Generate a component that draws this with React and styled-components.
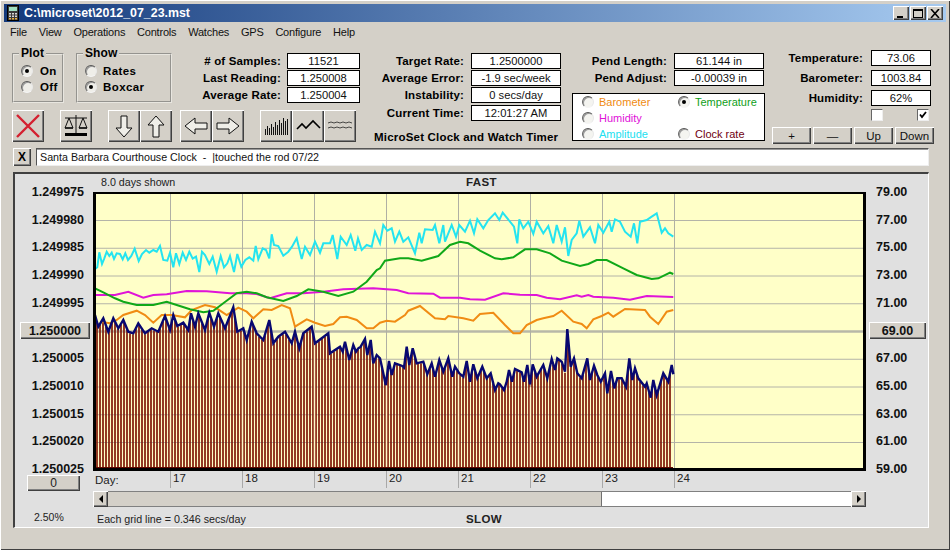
import React from 'react';
import styled, { createGlobalStyle, css } from 'styled-components';

const Global = createGlobalStyle`
  html, body { margin: 0; padding: 0; background: #d4d0c8; }
  * { box-sizing: border-box; }
`;

const raised = css`
  background: #d4d0c8;
  border: 0;
  box-shadow: inset 1px 1px #fff, inset -1px -1px #404040, inset -2px -2px #808080;
`;

const Win = styled.div`
  width: 950px; height: 550px; padding: 4px; overflow: hidden;
  background: #d4d0c8; color: #000;
  font: 11px "Liberation Sans", Arial, sans-serif;
  box-shadow: inset 1px 1px #fff, inset -1px -1px #404040;
`;
const TitleBar = styled.div`
  height: 18px; display: flex; align-items: center; padding: 0 3px;
  background: linear-gradient(90deg, #143a7c 0%, #a6caf0 100%);
`;
const TitleText = styled.span`
  flex: 1; margin-left: 5px; color: #fff; font-weight: 700; font-size: 12.4px;
`;
const CapBtn = styled.button`
  ${raised}; width: 16px; height: 14px; padding: 0; display: flex; align-items: center; justify-content: center;
`;
const CapGroup = styled.div`display: flex; gap: 1px;`;
const Menu = styled.nav`
  height: 20px; display: flex; align-items: center; padding-left: 6px; gap: 11.8px; font-size: 11px; letter-spacing: -.2px; color: #111;
`;
const Toolbar = styled.div`display: flex; height: 105px; padding-left: 8px;`;
const Col = styled.div`
  width: ${p => p.$w}px; flex: none; display: flex; flex-direction: column; padding-top: ${p => p.$top}px;
`;
const Row1 = styled.div`display: flex; align-items: flex-start; height: 56px;`;
const Group = styled.fieldset`
  width: ${p => p.$w}px; height: 56px; margin: 0 ${p => p.$mr}px 0 0; padding: 5px 0 0 7px; flex: none;
  border: 2px groove #e8e6e0; display: flex; flex-direction: column; gap: 4px; min-width: 0;
`;
const GroupTitle = styled.legend`
  padding: 0 2px; margin-left: -2px; font-size: 12px; font-weight: 700; line-height: 13px; letter-spacing: .1px;
`;
const RadioRow = styled.label`
  display: flex; align-items: center; gap: ${p => p.$gap || 6}px; height: 12px; font-weight: ${p => p.$plain ? 400 : 700};
  font-size: ${p => p.$plain ? 11 : 11.5}px; color: ${p => p.$color || '#000'}; letter-spacing: ${p => p.$plain ? 0 : .4}px;
`;
const Radio = styled.span`
  width: 12px; height: 12px; flex: none; border-radius: 50%; position: relative;
  background: ${p => p.$bg || '#efeee9'};
  border: 1px solid; border-color: #555 #e8e8e8 #f4f4f4 #666;
  box-shadow: inset 1px 1px #999;
  &::after {
    content: ''; display: ${p => p.$on ? 'block' : 'none'}; position: absolute; left: 3px; top: 3px;
    width: 4px; height: 4px; border-radius: 50%; background: #000;
  }
`;
const Stats = styled.div`
  display: flex; flex-direction: column; gap: ${p => p.$gap ?? 1}px; margin-top: ${p => p.$mt || 0}px;
`;
const StatRow = styled.div`
  display: grid; grid-template-columns: ${p => p.$lw}px ${p => p.$bw}px; column-gap: ${p => p.$cg}px; height: 16px; align-items: center;
`;
const StatLabel = styled.span`
  text-align: right; font-weight: 700; font-size: 11.5px; letter-spacing: .15px; white-space: nowrap;
`;
const StatBox = styled.span`
  height: 16px; line-height: 14px; background: #fff; border: 1px solid #000; text-align: center; font-size: 11.2px; color: #111;
`;
const Stat = ({ label, value, lw, bw, cg }) => (
  <StatRow $lw={lw} $bw={bw} $cg={cg}><StatLabel>{label}</StatLabel><StatBox>{value}</StatBox></StatRow>
);
const IconRow = styled.div`display: flex; margin-top: 7px;`;
const IconBtn = styled.button`
  ${raised}; width: 32px; height: 32px; padding: 0; margin-right: ${p => p.$mr || 0}px; flex: none;
  display: flex; align-items: center; justify-content: center;
`;
const AppTitle = styled.div`
  margin: 9px 0 0 14px; font-weight: 700; font-size: 11.5px; line-height: 14px; letter-spacing: .2px; white-space: nowrap;
`;
const Legend = styled.div`
  width: 193px; height: 48px; margin-top: 7px; background: #fff; border: 1px solid #000;
  display: grid; grid-template-columns: 96px 1fr; grid-auto-rows: 16px; padding: 0 0 0 9px;
`;
const LegendCell = styled.div`display: flex; align-items: center;`;
const Checks = styled.div`display: flex; gap: 34px; margin: 3px 0 0 99px;`;
const Check = styled.span`
  width: 12px; height: 12px; background: #fff; border: 1px solid; border-color: #666 #eee #eee #666;
  display: flex; align-items: center; justify-content: center;
`;
const SmallBtns = styled.div`display: flex; gap: 2px; margin-top: 6px;`;
const SmallBtn = styled.button`
  ${raised}; width: 39px; height: 17px; padding: 0; font: 11.5px "Liberation Sans", Arial, sans-serif; color: #111;
`;
const NoteRow = styled.div`display: flex; gap: 5px; margin: 1px 0 6px 9px; height: 18px;`;
const CloseNote = styled.button`
  ${raised}; width: 18px; height: 18px; padding: 0; font: 700 12px "Liberation Sans", Arial, sans-serif;
`;
const NoteField = styled.div`
  width: 893px; height: 18px; padding: 0 3px; line-height: 16px; font-size: 10.7px; white-space: pre; background: #fff; color: #111;
  border: 1px solid; border-color: #555 #eee #eee #555; box-shadow: inset 0 1px #999;
`;
const Panel = styled.div`
  margin-left: 9px; width: 916px; height: 356px; display: flex; background: #e0e0e0;
  border-style: solid; border-width: 2px 1px 1px 2px; border-color: #404040 #fff #fff #404040;
`;
const AxisCol = styled.div`
  width: ${p => p.$w}px; flex: none; display: flex; flex-direction: column; padding-top: 11px;
`;
const AxisStack = styled.div`display: flex; flex-direction: column; gap: 12.7px;`;
const Tick = styled.div`
  height: 15px; line-height: 15px; font-weight: 700; font-size: 12.5px; color: #111;
  text-align: ${p => p.$right ? 'right' : 'left'};
  padding: ${p => p.$right ? '0 9px 0 0' : '0 0 0 10px'};
`;
const AxisBtn = styled.button`
  ${raised}; display: block; height: 17px; width: ${p => p.$w}px; padding: 0; margin: -1px 0 -1px ${p => p.$ml}px;
  font: 700 12.5px "Liberation Sans", Arial, sans-serif; color: #111;
`;
const ZeroBtn = styled.button`
  ${raised}; height: 16px; width: 53px; margin: -2px 0 0 12px; padding: 0; font: 12px "Liberation Sans", Arial, sans-serif; color: #222;
`;
const Percent = styled.div`margin: 20px 0 0 19px; font-size: 10.5px; color: #222;`;
const Center = styled.div`width: 773px; flex: none; display: flex; flex-direction: column;`;
const CaptionRow = styled.div`
  height: ${p => p.$h}px; display: flex; align-items: center; padding: 0 0 ${p => p.$pb || 0}px ${p => p.$pl}px; font-size: 10.7px; color: #222;
`;
const CaptionLeft = styled.span`width: ${p => p.$w}px; flex: none;`;
const Strong = styled.span`font-weight: 700; font-size: 11.5px; letter-spacing: .4px;`;
const PlotFrame = styled.div`
  height: 279px; border: solid #000; border-width: 2px 3px 3px 3px; background: #ffffc8;
`;
const PlotSvg = styled.svg`display: block; width: 767px; height: 274px;`;
const DayRow = styled.div`display: flex; height: 17px; margin-bottom: 3px; font-size: 11.5px; color: #222;`;
const DayHead = styled.span`width: 77px; flex: none; padding: 3px 0 0 2px;`;
const DayCell = styled.span`width: 72px; flex: none; padding: 1px 0 0 2px; border-left: 1px solid #a8a8a8;`;
const Scroll = styled.div`
  height: 16px; display: flex; background: #fff; margin-bottom: 3px; border-top: 1px solid #808080; border-bottom: 1px solid #808080;
`;
const ScrollBtn = styled.button`
  ${raised}; width: 15px; height: 16px; margin-top: -1px; padding: 0; display: flex; align-items: center; justify-content: center; flex: none;
`;
const Thumb = styled.div`width: 494px; flex: none; background: #d4d0c8; box-shadow: inset -1px 0 #707070;`;
const Track = styled.div`flex: 1;`;
const Triangle = styled.i`
  width: 0; height: 0; border-style: solid; border-width: 4px 0 4px 4px; border-color: transparent transparent transparent #000;
  transform: ${p => p.$left ? 'scaleX(-1)' : 'none'};
`;

const pts = (ox, oy, a) => {
  const r = [];
  for (let i = 0; i < a.length; i += 2) r.push([ox + a[i] / 3, oy + a[i + 1] / 3]);
  return r;
};
const Z4 = a => pts(90, 190, a), Z5 = a => pts(380, 190, a), Z8 = a => pts(340, 325, a), Z9 = a => pts(500, 325, a);
const str = s => s.map(p => p[0].toFixed(1) + ',' + p[1].toFixed(1)).join(' ');

const cyan = [...Z4([15,237,22,232,28,187,36,222,43,205,50,185,58,198,65,188,72,207,80,190,90,192,98,208,106,190,114,210,124,198,134,176,146,213,156,192,168,180,178,188,190,180,200,185,210,168,220,210,232,212,240,188,250,232,258,190,268,222,278,188,288,210,298,185,308,206,318,200,328,246,336,185,345,195,358,222,368,200,380,245,392,198,402,232,412,220,420,198,432,246,442,192,454,230,466,210,478,202,490,212,497,168,505,208,518,175,528,180,538,205,545,133,552,165,565,168,580,197,595,185,606,170,620,145,635,207,645,170,660,195,675,155,690,188,700,160,720,160,728,135,742,207,752,140,770,165,782,135,796,182,804,145,815,180,830,165,845,170,855,125]),
  ...Z5([0,160,10,105,22,122,35,115,45,155,58,125,70,155,85,142,105,190,118,128,125,160,135,118,158,120,165,105,178,160,190,105,195,155,215,105,228,140,238,105,255,125,270,92,282,130,292,88,310,115,325,90,345,70,358,90,368,68,390,95,402,110,412,160,418,88,430,115,445,95,460,132,470,95,490,130,505,108,520,160,530,105,545,155,555,112,565,198,575,150,590,130,598,92,610,140,630,112,645,160,655,105,670,128,688,95,695,125,705,88,720,95,735,125,752,140,762,100,772,160,780,95,800,90,815,80,830,70,845,128,855,115,865,130,880,140])];
const green = [...Z4([15,295,40,307,75,325,100,335,140,345,190,345,230,335,260,345,300,358,340,367,370,362,400,340,440,310,470,305,500,310,530,322,580,333,620,318,655,298,700,305,745,318,790,305,830,275,860,240]),
  ...Z5([0,235,15,212,60,205,85,205,125,212,175,198,210,165,240,155,265,160,300,182,345,205,365,208,400,202,435,178,470,178,510,190,545,212,600,228,625,222,650,210,680,210,730,235,770,255,815,267,835,265,870,248,880,252])];
const magenta = [...Z4([15,315,75,315,115,305,160,323,190,315,230,313,290,303,350,304,420,310,470,310,500,312,540,325,590,310,640,310,700,305,760,298,850,295]),
  ...Z5([0,296,50,300,85,310,160,311,180,323,240,323,270,328,315,329,370,310,420,314,470,315,500,323,540,328,590,316,605,320,625,315,640,320,700,323,750,329,800,318,880,321])];
const orange = [...Z4([30,395,60,400,80,390,100,375,140,362,165,375,190,398,215,375,245,375,285,382,305,360,345,345,375,352,410,375,445,353,470,365,490,385,520,358,545,360,575,345,600,355,615,410,650,388,675,398,705,408,730,402,750,382,770,380,800,390,830,415,850,415]),
  ...Z5([0,398,20,392,45,395,75,375,85,362,120,348,165,385,195,388,205,378,250,385,280,392,300,372,340,368,375,405,400,430,420,430,440,405,470,390,490,385,520,378,545,362,580,395,605,402,620,415,640,388,665,378,685,368,700,380,735,357,795,360,810,380,835,402,860,365,880,360])];
const navy = [...Z4([15,375,25,410,40,385,55,425,70,385,85,415,100,390,115,425,130,430,145,400,165,430,185,415,205,425,225,378,240,420,250,375,262,408,280,398,295,420,303,370,315,410,325,370,345,420,358,368,372,410,385,370,405,415,430,352,442,425,460,415,470,450,485,395,500,430,520,450,538,390,550,460,565,440,585,425,605,460,615,425,628,475,640,430,665,410,675,460,695,445,715,430,720,490]),
  ...Z8([0,65,8,80,15,50,28,105,40,60,48,80,55,70,62,65,75,42,82,90,92,45,100,115,110,90,120,100,130,145,137,180,147,108,155,150,165,115,185,122,192,128,200,65,208,120,218,70,230,115,250,110,262,148,275,115,285,155,298,105,310,140,325,100,337,155,345,125,358,145,370,155,380,108,390,170,400,118,412,160,427,125,440,160,452,145,465,195,475,175]),
  ...Z9([0,178,12,195,20,170,27,135,36,170,45,132,65,142,72,170,82,120,90,178,98,118,110,155,130,120,142,160,155,102,165,135,172,100,185,110,195,140,202,12,212,125,222,100,232,145,245,160,262,100,270,165,282,122,292,150,302,170,315,145,322,205,333,138,343,190,352,160,365,160,378,185,388,100,397,165,405,130,415,160,435,185,440,175,452,218,460,165,470,210,490,145,505,170,515,120,520,148])];

const navyAt = x => {
  for (let i = 1; i < navy.length; i++) {
    if (x <= navy[i][0]) {
      const [a, b] = navy[i - 1], [c, d] = navy[i];
      return b + (d - b) * (x - a) / (c - a || 1);
    }
  }
  return navy[navy.length - 1][1];
};
const dayX = [170, 242, 314, 386, 458, 530, 602, 674];
const gridY = Array.from({ length: 9 }, (_, i) => 220.5 + i * 27.75);
const bars = [];
for (let x = 97; x < 673; x += 3) bars.push(`M${x} ${navyAt(x) + 1}V468`);
const dayCuts = dayX.slice(0, -1).map(x => `M${x + .5} ${navyAt(x) + 3}V468`).join('');

const CalcIcon = () => (
  <svg width="12" height="16" viewBox="0 0 12 16">
    <rect x=".5" y=".5" width="11" height="15" fill="#3a3a3a" stroke="#000" />
    <rect x="2" y="2" width="8" height="4" fill="#9fe0c0" />
    {[2, 5, 8].map(x => [8, 10.5, 13].map(y => (
      <rect key={x + '-' + y} x={x} y={y} width="2" height="1.5" fill={y === 13 ? '#e8b040' : '#d8d8d8'} />
    )))}
  </svg>
);
const Sv = ({ children }) => <svg width="32" height="32" viewBox="0 0 32 32">{children}</svg>;
const Arrow = ({ points }) => <Sv><polygon points={points} fill="#efeee8" stroke="#111" strokeWidth="1" /></Sv>;
const barH = [6, 9, 7, 11, 8, 13, 10, 15, 12, 17, 14, 16];

const legendItems = [
  ['Barometer', '#f08a10', false], ['Temperature', '#10a020', true],
  ['Humidity', '#e010d8', false], null,
  ['Amplitude', '#20e0f0', false], ['Clock rate', '#700010', false],
];
const days = [17, 18, 19, 20, 21, 22, 23, 24];
const leftTicks = ['1.249975', '1.249980', '1.249985', '1.249990', '1.249995', '1.250000', '1.250005', '1.250010', '1.250015', '1.250020', '1.250025'];
const rightTicks = ['79.00', '77.00', '75.00', '73.00', '71.00', '69.00', '67.00', '65.00', '63.00', '61.00', '59.00'];

export default function App() {
  return (
    <Win>
      <Global />
      <TitleBar>
        <CalcIcon />
        <TitleText>C:\microset\2012_07_23.mst</TitleText>
        <CapGroup>
          <CapBtn><svg width="10" height="9"><rect x="1" y="7" width="6" height="2" fill="#000" /></svg></CapBtn>
          <CapBtn><svg width="10" height="9"><rect x=".5" y=".5" width="9" height="8" fill="none" stroke="#000" /><rect x="0" y="0" width="10" height="2" fill="#000" /></svg></CapBtn>
          <CapBtn><svg width="10" height="9"><path d="M1 0l8 9M9 0l-8 9" stroke="#000" strokeWidth="1.6" /></svg></CapBtn>
        </CapGroup>
      </TitleBar>
      <Menu>
        {['File', 'View', 'Operations', 'Controls', 'Watches', 'GPS', 'Configure', 'Help'].map(m => <span key={m}>{m}</span>)}
      </Menu>
      <Toolbar>
        <Col $w={348} $top={5}>
          <Row1>
            <Group $w={52} $mr={12}>
              <GroupTitle>Plot</GroupTitle>
              <RadioRow $gap={7}><Radio $on />On</RadioRow>
              <RadioRow $gap={7}><Radio />Off</RadioRow>
            </Group>
            <Group $w={96} $mr={0}>
              <GroupTitle>Show</GroupTitle>
              <RadioRow><Radio />Rates</RadioRow>
              <RadioRow><Radio $on />Boxcar</RadioRow>
            </Group>
            <Stats $mt={6}>
              <Stat label="# of Samples:" value="11521" lw={109} bw={73} cg={6} />
              <Stat label="Last Reading:" value="1.250008" lw={109} bw={73} cg={6} />
              <Stat label="Average Rate:" value="1.250004" lw={109} bw={73} cg={6} />
            </Stats>
          </Row1>
          <IconRow>
            <IconBtn $mr={16}><Sv><path d="M5 5L27 27M27 5L5 27" stroke="#d42030" strokeWidth="2.4" /></Sv></IconBtn>
            <IconBtn $mr={16}>
              <Sv>
                <path d="M5 8H27M16 5V23M9 8L5 18H13ZM23 8L19 18H27Z" fill="none" stroke="#111" />
                <path d="M5 18H13M19 18H27" stroke="#111" strokeWidth="1.5" />
                <rect x="5" y="23" width="22" height="3" fill="#000" />
              </Sv>
            </IconBtn>
            <IconBtn><Arrow points="13,6 19,6 19,18 24,18 16,27 8,18 13,18" /></IconBtn>
            <IconBtn $mr={8}><Arrow points="13,27 19,27 19,15 24,15 16,6 8,15 13,15" /></IconBtn>
            <IconBtn><Arrow points="27,13 27,19 15,19 15,24 5,16 15,8 15,13" /></IconBtn>
            <IconBtn $mr={16}><Arrow points="5,13 5,19 17,19 17,24 27,16 17,8 17,13" /></IconBtn>
            <IconBtn>
              <Sv>{barH.map((h, i) => <rect key={i} x={5 + i * 2} y={25 - h} width="1" height={h} fill="#111" />)}</Sv>
            </IconBtn>
            <IconBtn><Sv><polyline points="5,19 10,14 14,18 21,11 28,18" fill="none" stroke="#000" strokeWidth="1.6" /></Sv></IconBtn>
            <IconBtn>
              <Sv>
                <path d="M4 13l3-1 3 1 3-1 3 1 3-1 3 1 3-1 3 1" fill="none" stroke="#222" strokeWidth=".8" />
                <path d="M4 18l3-1 3 1 3-1 3 1 3-1 3 1 3-1 3 1" fill="none" stroke="#222" strokeWidth=".8" />
              </Sv>
            </IconBtn>
          </IconRow>
        </Col>
        <Col $w={212} $top={11}>
          <Stats>
            <Stat label="Target Rate:" value="1.2500000" lw={104} bw={90} cg={7} />
            <Stat label="Average Error:" value="-1.9 sec/week" lw={104} bw={90} cg={7} />
            <Stat label="Instability:" value="0 secs/day" lw={104} bw={90} cg={7} />
          </Stats>
          <Stats $mt={2}>
            <Stat label="Current Time:" value="12:01:27 AM" lw={104} bw={90} cg={7} />
          </Stats>
          <AppTitle>MicroSet Clock and Watch Timer</AppTitle>
        </Col>
        <Col $w={200} $top={11}>
          <Stats>
            <Stat label="Pend Length:" value="61.144 in" lw={95} bw={90} cg={7} />
            <Stat label="Pend Adjust:" value="-0.00039 in" lw={95} bw={90} cg={7} />
          </Stats>
          <Legend>
            {legendItems.map((it, i) => (
              <LegendCell key={i}>
                {it && <RadioRow $plain $gap={5} $color={it[1]}><Radio $on={it[2]} $bg="#f4f4f0" />{it[0]}</RadioRow>}
              </LegendCell>
            ))}
          </Legend>
        </Col>
        <Col $w={162} $top={8}>
          <Stats $gap={4}>
            <Stat label="Temperature:" value="73.06" lw={91} bw={60} cg={8} />
            <Stat label="Barometer:" value="1003.84" lw={91} bw={60} cg={8} />
            <Stat label="Humidity:" value="62%" lw={91} bw={60} cg={8} />
          </Stats>
          <Checks>
            <Check />
            <Check><svg width="8" height="8"><path d="M1 3.5L3 6L7 1" fill="none" stroke="#000" strokeWidth="1.8" /></svg></Check>
          </Checks>
          <SmallBtns>
            <SmallBtn>+</SmallBtn><SmallBtn>—</SmallBtn><SmallBtn>Up</SmallBtn><SmallBtn>Down</SmallBtn>
          </SmallBtns>
        </Col>
      </Toolbar>
      <NoteRow>
        <CloseNote>X</CloseNote>
        <NoteField>Santa Barbara Courthouse Clock  -  |touched the rod 07/22</NoteField>
      </NoteRow>
      <Panel>
        <AxisCol $w={78}>
          <AxisStack>
            {leftTicks.map(t => t === '1.250000'
              ? <AxisBtn key={t} $w={70} $ml={5}>{t}</AxisBtn>
              : <Tick key={t} $right>{t}</Tick>)}
          </AxisStack>
          <ZeroBtn>0</ZeroBtn>
          <Percent>2.50%</Percent>
        </AxisCol>
        <Center>
          <CaptionRow $h={18} $pb={3} $pl={8}>
            <CaptionLeft $w={365}>8.0 days shown</CaptionLeft>
            <Strong>FAST</Strong>
          </CaptionRow>
          <PlotFrame>
            <PlotSvg viewBox="96 194 767 274">
              {gridY.map((y, i) => (
                <line key={y} x1="96" x2="863" y1={y} y2={y} stroke={i === 4 ? '#b8b8a8' : '#b4b4a8'} strokeWidth={i === 4 ? 2.5 : 1} />
              ))}
              {dayX.map(x => <line key={x} x1={x + .5} x2={x + .5} y1="194" y2="468" stroke="#b0b0a4" />)}
              <path d={bars.join('')} stroke="#801808" strokeWidth="1.7" />
              <path d={dayCuts} stroke="#fff8c8" strokeWidth="1.4" />
              <line x1="96" x2="673" y1="467.5" y2="467.5" stroke="#600800" />
              <polyline points={str(cyan)} fill="none" stroke="#24e4f0" strokeWidth="2" />
              <polyline points={str(orange)} fill="none" stroke="#f08c14" strokeWidth="2" />
              <polyline points={str(magenta)} fill="none" stroke="#e014d8" strokeWidth="2" />
              <polyline points={str(green)} fill="none" stroke="#10a818" strokeWidth="2" />
              <polyline points={str(navy)} fill="none" stroke="#080870" strokeWidth="2.4" />
            </PlotSvg>
          </PlotFrame>
          <DayRow>
            <DayHead>Day:</DayHead>
            {days.map(d => <DayCell key={d}>{d}</DayCell>)}
          </DayRow>
          <Scroll>
            <ScrollBtn><Triangle $left /></ScrollBtn>
            <Thumb />
            <Track />
            <ScrollBtn><Triangle /></ScrollBtn>
          </Scroll>
          <CaptionRow $h={17} $pl={4}>
            <CaptionLeft $w={369}>Each grid line = 0.346 secs/day</CaptionLeft>
            <Strong>SLOW</Strong>
          </CaptionRow>
        </Center>
        <AxisCol $w={62}>
          <AxisStack>
            {rightTicks.map(t => t === '69.00'
              ? <AxisBtn key={t} $w={57} $ml={3}>{t}</AxisBtn>
              : <Tick key={t}>{t}</Tick>)}
          </AxisStack>
        </AxisCol>
      </Panel>
    </Win>
  );
}
